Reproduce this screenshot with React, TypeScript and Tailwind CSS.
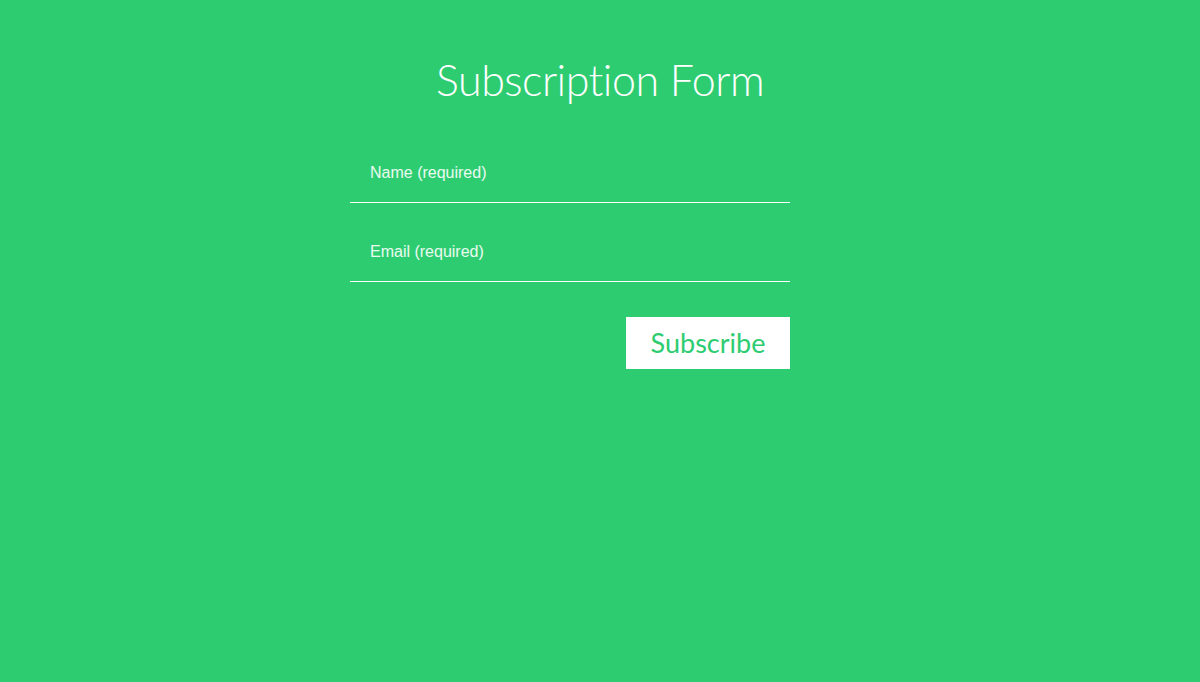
import React, { useState } from 'react';

export default function App() {
  const [name, setName] = useState('');
  const [email, setEmail] = useState('');

  const handleSubmit = (e: React.FormEvent) => {
    e.preventDefault();
  };

  return (
    <div className="min-h-screen bg-[#2ecc71] text-white">
      <div className="mx-auto w-[500px] pt-[52px]">
        <h1 className="text-center font-['Lato',sans-serif] text-[43px] font-light leading-[56px] tracking-[-0.5px]">
          Subscription Form
        </h1>
        <form onSubmit={handleSubmit} className="mt-[35px] flex w-[440px] flex-col">
          <input
            type="text"
            placeholder="Name (required)"
            value={name}
            onChange={(e) => setName(e.target.value)}
            className="h-[60px] w-full border-b border-white bg-transparent px-5 font-['Liberation_Sans',Arial,sans-serif] text-base text-white outline-none placeholder:text-white/90"
            required
          />
          <input
            type="email"
            placeholder="Email (required)"
            value={email}
            onChange={(e) => setEmail(e.target.value)}
            className="mt-[19px] h-[60px] w-full border-b border-white bg-transparent px-5 font-['Liberation_Sans',Arial,sans-serif] text-base text-white outline-none placeholder:text-white/90"
            required
          />
          <div className="mt-[35px] flex justify-end">
            <button
              type="submit"
              className="h-[52px] w-[164px] bg-white font-['Lato',sans-serif] text-[27px] text-[#2ecc71]"
            >
              Subscribe
            </button>
          </div>
        </form>
      </div>
    </div>
  );
}
